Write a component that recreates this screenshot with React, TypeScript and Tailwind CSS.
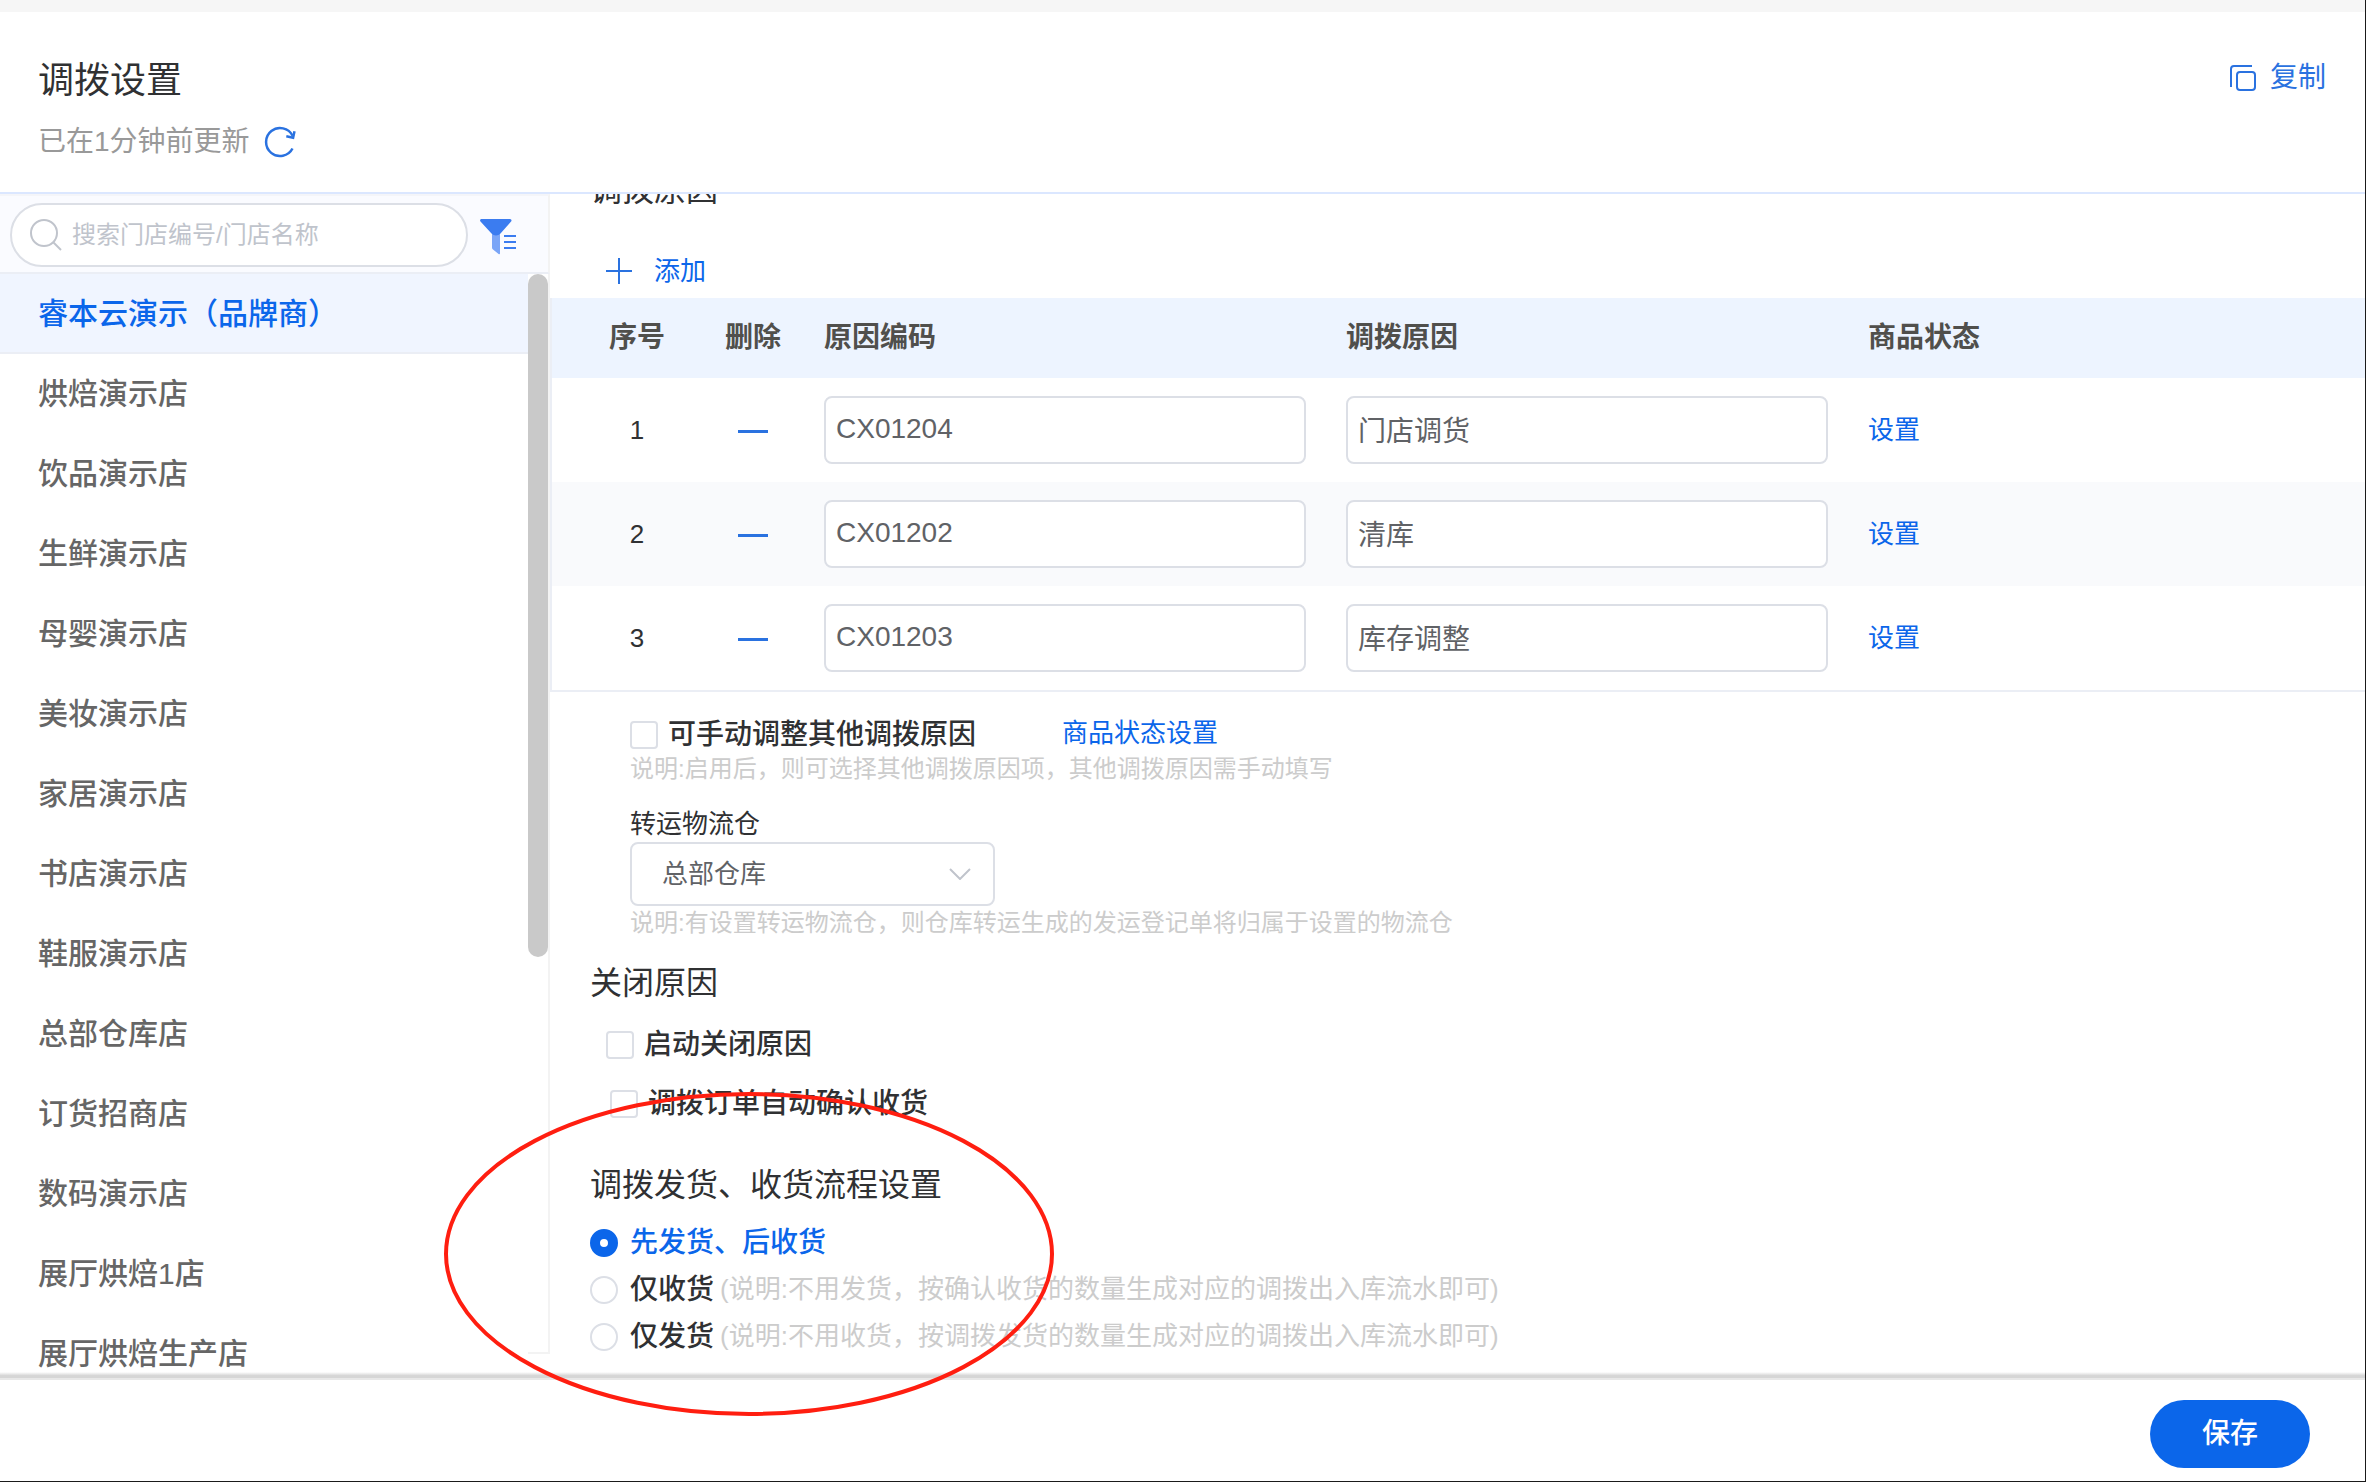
import React, { useState } from 'react';

interface Reason {
  id: number;
  code: string;
  name: string;
}

const STORES = [
  '睿本云演示（品牌商）',
  '烘焙演示店',
  '饮品演示店',
  '生鲜演示店',
  '母婴演示店',
  '美妆演示店',
  '家居演示店',
  '书店演示店',
  '鞋服演示店',
  '总部仓库店',
  '订货招商店',
  '数码演示店',
  '展厅烘焙1店',
  '展厅烘焙生产店',
];

const INITIAL_REASONS: Reason[] = [
  { id: 1, code: 'CX01204', name: '门店调货' },
  { id: 2, code: 'CX01202', name: '清库' },
  { id: 3, code: 'CX01203', name: '库存调整' },
];

const FLOWS = [
  { value: 'both', label: '先发货、后收货', hint: '' },
  {
    value: 'receive',
    label: '仅收货',
    hint: '(说明:不用发货，按确认收货的数量生成对应的调拨出入库流水即可)',
  },
  {
    value: 'send',
    label: '仅发货',
    hint: '(说明:不用收货，按调拨发货的数量生成对应的调拨出入库流水即可)',
  },
];

const RefreshIcon = () => (
  <svg className="w-8 h-8" viewBox="0 0 32 32" fill="none" stroke="#2a72e0" strokeWidth="2.5">
    <path d="M28.5 22.5A14 14 0 1 1 28.6 9.8" />
    <path d="M22.3 10.2l6.8 1.600 1.400-6.600" />
  </svg>
);

const CopyIcon = () => (
  <svg className="w-[26px] h-[26px]" viewBox="0 0 26 26" fill="none" stroke="#2a72e0" strokeWidth="2">
    <path d="M22 1H4a3 3 0 0 0-3 3v18" />
    <rect x="7" y="7" width="18" height="18" rx="3" />
  </svg>
);

const SearchIcon = () => (
  <svg className="w-8 h-8 shrink-0" viewBox="0 0 32 32" fill="none" stroke="#c0c4cc" strokeWidth="2">
    <circle cx="14" cy="14" r="13" />
    <path d="M23 23l8 8" />
  </svg>
);

const FilterIcon = () => (
  <svg className="w-9 h-9 mt-1" viewBox="0 0 36 36">
    <path d="M12 15h8v19.5c0 .8-.8 1-1.4.5l-5.600-4.400a2.500 2.500 0 0 1-1-2z" fill="#7aa5f7" />
    <path d="M1.500 0h28.500c1.400 0 2 1.600 1.100 2.600L20.500 14.500c-2.500 2.500-6.500 2.500-9 0L.500 2.600C-.400 1.600.200 0 1.500 0z" fill="#3b7cf0" />
    <path d="M24 17h12M24 23h12M24 29h12" stroke="#3b7cf0" strokeWidth="2" />
  </svg>
);

const CHECKBOX =
  'appearance-none shrink-0 w-7 h-7 bg-white border-2 border-[#dcdfe6] rounded-sm checked:bg-[#0b66ea] checked:border-[#0b66ea]';

const TEXT_INPUT =
  'block w-full h-[68px] px-[10px] pb-[2px] bg-white border-2 border-[#dcdfe6] rounded-lg text-[28px] text-[#606266] focus:outline-none focus:border-[#0b66ea]';

const Header = () => (
  <header className="flex shrink-0 justify-between h-[182px] pl-[38px] pr-[39px] pt-[43px] bg-white border-b-2 border-[#dbe7ff]">
    <div>
      <h1 className="text-[36px] leading-[52px] text-[#303133]">调拨设置</h1>
      <div className="flex items-center gap-[14px] mt-[15px] text-[28px] leading-[40px] text-[#999999]">
        已在1分钟前更新
        <button type="button" aria-label="刷新">
          <RefreshIcon />
        </button>
      </div>
    </div>
    <button type="button" className="flex items-center gap-[14px] h-[46px] text-[28px] text-[#2a72e0]">
      <CopyIcon />
      复制
    </button>
  </header>
);

const Sidebar = () => {
  const [active, setActive] = useState(STORES[0]);

  return (
    <aside className="flex flex-col shrink-0 w-[550px]">
      <div className="flex shrink-0 items-center h-20 pl-[10px] pt-[2px] gap-3 bg-[#fafbff] border-y-2 border-r-2 border-t-[#f4f5f9] border-b-[#ebeef5] border-r-[#f3f3f3]">
        <label className="flex items-center gap-[10px] w-[458px] h-16 px-[18px] bg-white border-2 border-[#dcdfe6] rounded-full">
          <SearchIcon />
          <input
            type="text"
            aria-label="搜索门店"
            placeholder="搜索门店编号/门店名称"
            className="w-full text-2xl placeholder:text-[#c0c4cc] focus:outline-none"
          />
        </label>
        <button type="button" aria-label="筛选">
          <FilterIcon />
        </button>
      </div>
      <div className="flex flex-1 min-h-0">
        <nav className="flex-1 overflow-hidden">
          {STORES.map((store) => (
            <button
              key={store}
              type="button"
              onClick={() => setActive(store)}
              className={`block w-full h-20 pl-[38px] text-left text-[30px] font-medium border-b-2 ${
                store === active
                  ? 'bg-[#f0f5ff] border-[#ebeef5] text-[#0b66ea]'
                  : 'bg-white border-white text-[#666666]'
              }`}
            >
              {store}
            </button>
          ))}
        </nav>
        <div className="w-[22px] mb-[26px] border-r-2 border-b-2 border-[#f3f3f3]">
          <div className="w-5 h-[683px] bg-[#c9c9c9] rounded-full" />
        </div>
      </div>
    </aside>
  );
};

const ReasonTable = () => {
  const [reasons, setReasons] = useState<Reason[]>(INITIAL_REASONS);

  const addReason = () => {
    setReasons([...reasons, { id: Date.now(), code: '', name: '' }]);
  };

  const removeReason = (id: number) => {
    setReasons(reasons.filter((r) => r.id !== id));
  };

  const updateReason = (id: number, patch: Partial<Reason>) => {
    setReasons(reasons.map((r) => (r.id === id ? { ...r, ...patch } : r)));
  };

  return (
    <>
      <div className="flex items-center h-[54px] mt-[34px] pl-14">
        <button
          type="button"
          onClick={addReason}
          className="flex items-center gap-[22px] text-[26px] text-[#0b66ea]"
        >
          <svg className="w-[26px] h-[26px]" viewBox="0 0 26 26" stroke="#2a72e0" strokeWidth="2">
            <path d="M13 0v26M0 13h26" />
          </svg>
          添加
        </button>
      </div>
      <div className="border-l-2 border-b-2 border-[#ebeef5]">
        <table className="w-full table-fixed">
          <colgroup>
            <col className="w-[142px]" />
            <col className="w-[118px]" />
            <col className="w-[522px]" />
            <col className="w-[522px]" />
            <col />
          </colgroup>
          <thead>
            <tr className="h-20 bg-[#edf4ff] text-left text-[28px] text-[#504f4c]">
              <th className="pl-7 text-center">序号</th>
              <th className="text-center">删除</th>
              <th className="pl-3">原因编码</th>
              <th className="pl-3">调拨原因</th>
              <th className="pl-3">商品状态</th>
            </tr>
          </thead>
          <tbody>
            {reasons.map((reason, index) => (
              <tr key={reason.id} className="h-[104px] text-[26px] even:bg-[#f9fafc]">
                <td className="pl-7 text-center text-[#303133]">{index + 1}</td>
                <td>
                  <button
                    type="button"
                    aria-label="删除"
                    onClick={() => removeReason(reason.id)}
                    className="flex items-center justify-center mx-auto w-10 h-10"
                  >
                    <svg className="w-[30px] h-1 mt-1" viewBox="0 0 30 4">
                      <rect width="30" height="3" fill="#2a72e0" />
                    </svg>
                  </button>
                </td>
                <td className="pl-3 pr-7">
                  <input
                    type="text"
                    aria-label="原因编码"
                    value={reason.code}
                    onChange={(e) => updateReason(reason.id, { code: e.target.value })}
                    className={TEXT_INPUT}
                  />
                </td>
                <td className="pl-3 pr-7">
                  <input
                    type="text"
                    aria-label="调拨原因"
                    value={reason.name}
                    onChange={(e) => updateReason(reason.id, { name: e.target.value })}
                    className={TEXT_INPUT}
                  />
                </td>
                <td className="pl-3">
                  <a href="#status" className="text-[#0b66ea]">
                    设置
                  </a>
                </td>
              </tr>
            ))}
          </tbody>
        </table>
      </div>
    </>
  );
};

const FlowSettings = () => {
  const [flow, setFlow] = useState('both');

  return (
    <div className="mt-[14px] pl-10">
      {FLOWS.map((item) => (
        <label key={item.value} className="flex items-center h-[47px]">
          <input
            type="radio"
            name="flow"
            value={item.value}
            checked={flow === item.value}
            onChange={() => setFlow(item.value)}
            className="appearance-none shrink-0 w-7 h-7 mr-3 bg-white border-2 border-[#dcdfe6] rounded-full checked:border-[10px] checked:border-[#0b66ea]"
          />
          <span
            className={`text-[28px] font-medium ${
              flow === item.value ? 'text-[#0b66ea]' : 'text-[#303133]'
            }`}
          >
            {item.label}
          </span>
          {item.hint && <span className="ml-[6px] text-[26px] text-[#cccccc]">{item.hint}</span>}
        </label>
      ))}
    </div>
  );
};

export default function App() {
  return (
    <div className="relative flex flex-col h-screen overflow-hidden bg-white border-r border-b border-[#1a1a1a] font-['Liberation_Sans','Noto_Sans_CJK_SC',sans-serif]">
      <div className="shrink-0 h-3 bg-[#f6f6f6]" />
      <Header />

      <div className="flex flex-1 min-h-0">
        <Sidebar />

        <main className="flex-1 min-w-0 overflow-hidden">
          <h2 className="-mt-6 pl-10 text-[32px] leading-[40px] text-[#303133]">调拨原因</h2>
          <ReasonTable />

          <div className="mt-[23px] pl-20">
            <div className="flex items-center h-10">
              <label className="flex items-center gap-[10px] text-[28px] font-medium text-[#303133]">
                <input type="checkbox" className={CHECKBOX} />
                可手动调整其他调拨原因
              </label>
              <a href="#status" className="ml-[86px] pb-1 text-[26px] text-[#0b66ea]">
                商品状态设置
              </a>
            </div>
            <p className="text-2xl leading-[28px] text-[#cccccc]">
              说明:启用后，则可选择其他调拨原因项，其他调拨原因需手动填写
            </p>

            <label htmlFor="warehouse" className="block mt-[23px] text-[26px] leading-[36px] text-[#303133]">
              转运物流仓
            </label>
            <div className="relative w-[365px]">
              <select
                id="warehouse"
                className="appearance-none block w-full h-16 pl-[30px] pr-12 bg-white border-2 border-[#dcdfe6] rounded-lg text-[26px] text-[#606266]"
              >
                <option>总部仓库</option>
              </select>
              <svg
                className="absolute right-6 top-[26px] w-[22px] h-3 pointer-events-none"
                viewBox="0 0 22 12"
                fill="none"
                stroke="#c0c4cc"
                strokeWidth="2"
              >
                <path d="M1 1l10 10L21 1" />
              </svg>
            </div>
            <p className="mt-[3px] text-2xl leading-[28px] text-[#cccccc]">
              说明:有设置转运物流仓，则仓库转运生成的发运登记单将归属于设置的物流仓
            </p>
          </div>

          <h2 className="mt-[26px] pl-10 text-[32px] leading-[40px] text-[#303133]">关闭原因</h2>
          <label className="flex items-center gap-[10px] h-10 mt-[22px] pl-14 text-[28px] font-medium text-[#303133]">
            <input type="checkbox" className={CHECKBOX} />
            启动关闭原因
          </label>
          <label className="flex items-center gap-[10px] h-10 mt-[19px] pl-[60px] text-[28px] font-medium text-[#303133]">
            <input type="checkbox" className={CHECKBOX} />
            调拨订单自动确认收货
          </label>

          <h2 className="mt-[41px] pl-10 text-[32px] leading-[40px] text-[#303133]">
            调拨发货、收货流程设置
          </h2>
          <FlowSettings />
        </main>
      </div>

      <footer className="relative flex shrink-0 items-start justify-end h-[101px] pt-5 pr-[55px] bg-white">
        <div className="absolute inset-x-0 bottom-full h-2 bg-linear-to-b from-transparent to-[#d6d6d6] to-60% border-b-2 border-[#e8e8e8]" />
        <button
          type="button"
          className="w-40 h-[68px] bg-[#0b66ea] rounded-full text-[28px] font-medium text-white"
        >
          保存
        </button>
      </footer>

      {/* Red marker around the flow settings */}
      <svg
        className="absolute left-[444px] top-[1092px] w-[610px] h-[324px] pointer-events-none"
        viewBox="0 0 610 324"
        fill="none"
      >
        <ellipse cx="305" cy="162" rx="303" ry="160" stroke="#ff1e10" strokeWidth="4" />
      </svg>
    </div>
  );
}
